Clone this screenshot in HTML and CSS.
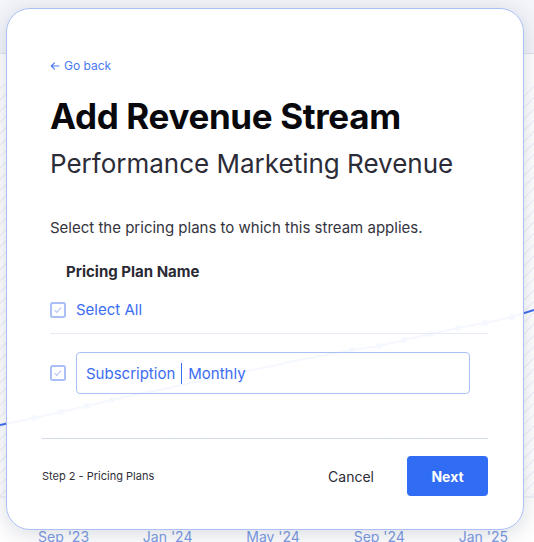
FILE: index.html
```html
<!DOCTYPE html>
<html>
<head>
<meta charset="utf-8">
<link rel="stylesheet" href="styles.css">
</head>
<body>
<div class="page">
  <div class="topbar"></div>
  <div class="plot">
    <svg class="plot-svg" width="534" height="453" viewBox="0 0 534 453">
      <defs>
        <pattern id="hatch" width="8" height="8" patternUnits="userSpaceOnUse" patternTransform="rotate(45)">
          <line x1="0" y1="0" x2="0" y2="8" stroke="#d9e2fa" stroke-width="1"/>
        </pattern>
      </defs>
      <rect x="0" y="30" width="534" height="413" fill="url(#hatch)"/>
      <line x1="0" y1="443" x2="534" y2="443" stroke="#e3e8f3" stroke-width="1"/>
      <polyline fill="none" stroke="#3f6ef0" stroke-width="2" points="0,371 34,364 61,358 87,352 112,346 138,340 164,335 190,329 216,324 242,318 268,313 294,307 320,302 352,296 379,292 404,286 431,280 458,274 485,269 512,263 534,256"/>
      <g fill="#3f6ef0">
        <circle cx="34" cy="364" r="3"/><circle cx="61" cy="358" r="3"/><circle cx="87" cy="352" r="3"/><circle cx="112" cy="346" r="3"/>
        <circle cx="352" cy="296" r="3"/><circle cx="379" cy="292" r="3"/><circle cx="404" cy="286" r="3"/><circle cx="431" cy="280" r="3"/><circle cx="458" cy="274" r="3"/><circle cx="485" cy="269" r="3"/><circle cx="512" cy="263" r="3"/>
      </g>
    </svg>
  </div>
  <div class="axis">
    <span>Sep '23</span><span>Jan '24</span><span>May '24</span><span>Sep '24</span><span>Jan '25</span>
  </div>

  <div class="modal">
    <div class="body">
      <a class="back"><svg width="10" height="10" viewBox="0 0 10 10"><path d="M9 5H1.5M4.5 1.8L1.3 5l3.2 3.2" fill="none" stroke="#4a7af0" stroke-width="1.1" stroke-linecap="round" stroke-linejoin="round"/></svg>Go back</a>
      <h1 class="title">Add Revenue Stream</h1>
      <h2 class="subtitle">Performance Marketing Revenue</h2>
      <p class="desc">Select the pricing plans to which this stream applies.</p>
      <div class="col-head">Pricing Plan Name</div>
      <div class="row select-all">
        <span class="check"><svg width="16" height="16" viewBox="0 0 16 16"><rect x="1" y="1" width="14" height="14" rx="1.5" fill="#fff" stroke="#abc0f6" stroke-width="2"/><path d="M4.8 8.3l2 2 4-4.4" fill="none" stroke="#b4c6f4" stroke-width="1.1" stroke-linecap="round" stroke-linejoin="round"/></svg></span>
        <span class="label">Select All</span>
      </div>
      <div class="divider"></div>
      <div class="row plan">
        <span class="check"><svg width="16" height="16" viewBox="0 0 16 16"><rect x="1" y="1" width="14" height="14" rx="1.5" fill="#fff" stroke="#abc0f6" stroke-width="2"/><path d="M4.8 8.3l2 2 4-4.4" fill="none" stroke="#b4c6f4" stroke-width="1.1" stroke-linecap="round" stroke-linejoin="round"/></svg></span>
        <div class="field"><span>Subscription</span><span class="sep"></span><span>Monthly</span></div>
      </div>
    </div>
    <div class="footer">
      <span class="step">Step 2 - Pricing Plans</span>
      <div class="actions">
        <button class="cancel">Cancel</button>
        <button class="next">Next</button>
      </div>
    </div>
  </div>
</div>
</body>
</html>
```
FILE: styles.css
```css
* { box-sizing: border-box; }
html, body { margin: 0; padding: 0; }
body {
  font-family: Inter, "Noto Sans", sans-serif;
  background: #ffffff;
  width: 534px;
  height: 542px;
  overflow: hidden;
}
.page {
  position: relative;
  width: 534px;
  height: 542px;
  overflow: hidden;
  background: #ffffff;
}
.topbar {
  height: 54px;
  background: #f3f5fa;
  border-bottom: 1px solid #dfe4ef;
}
.plot { height: 453px; }
.plot-svg { display: block; }
.axis {
  display: flex;
  justify-content: space-between;
  padding: 0 26px 0 38px;
  margin-top: 21px;
  font-size: 14px;
  line-height: 17px;
  color: #7c9be6;
}
.modal {
  position: absolute;
  left: 6px;
  top: 8px;
  width: 518px;
  height: 522px;
  background: rgba(255, 255, 255, 0.95);
  border: 1px solid #aabff5;
  border-radius: 24px;
  box-shadow: 0 4px 22px rgba(40, 50, 80, 0.18);
  display: flex;
  flex-direction: column;
}
.body {
  padding: 49px 35px 0 43px;
  display: flex;
  flex-direction: column;
}
.back {
  display: flex;
  align-items: center;
  gap: 4px;
  font-size: 12px;
  line-height: 16px;
  color: #4a7af0;
}
.title {
  margin: 21px 0 0;
  font-size: 35px;
  line-height: 42px;
  font-weight: 700;
  letter-spacing: -0.35px;
  color: #09090d;
}
.subtitle {
  margin: 11px 0 0;
  font-size: 26px;
  line-height: 32px;
  font-weight: 400;
  color: #2c2c38;
}
.desc {
  margin: 38px 0 0;
  font-size: 15px;
  line-height: 20px;
  color: #34343e;
}
.col-head {
  margin: 24px 0 0 16px;
  font-size: 15px;
  line-height: 20px;
  font-weight: 650;
  color: #2a2a34;
}
.row {
  display: flex;
  align-items: center;
  gap: 10px;
}
.check { display: flex; width: 16px; height: 16px; }
.select-all { margin-top: 18px; }
.label {
  font-size: 15px;
  line-height: 20px;
  color: #3b6cf2;
}
.divider {
  height: 1px;
  background: #e7ebf5;
  margin-top: 13px;
}
.plan { margin-top: 18px; }
.field {
  flex: 1;
  margin-right: 18px;
  height: 42px;
  border: 1px solid #aabff5;
  border-radius: 4px;
  display: flex;
  align-items: center;
  gap: 6px;
  padding-left: 9px;
  font-size: 15px;
  color: #3b6cf2;
}
.sep {
  width: 1px;
  height: 21px;
  background: #3b6cf2;
}
.footer {
  margin: 44px 35px 0 35px;
  border-top: 1px solid #d3dae6;
  padding-top: 17px;
  display: flex;
  align-items: center;
  justify-content: space-between;
}
.step {
  font-size: 11px;
  color: #2f2f38;
}
.actions {
  display: flex;
  align-items: center;
  gap: 33px;
}
button {
  font-family: inherit;
  border: none;
  background: none;
  padding: 0;
}
.cancel {
  font-size: 14px;
  color: #2d2d36;
}
.next {
  width: 81px;
  height: 40px;
  border-radius: 4px;
  background: #316cf4;
  color: #ffffff;
  font-size: 14px;
  font-weight: 700;
}
```
